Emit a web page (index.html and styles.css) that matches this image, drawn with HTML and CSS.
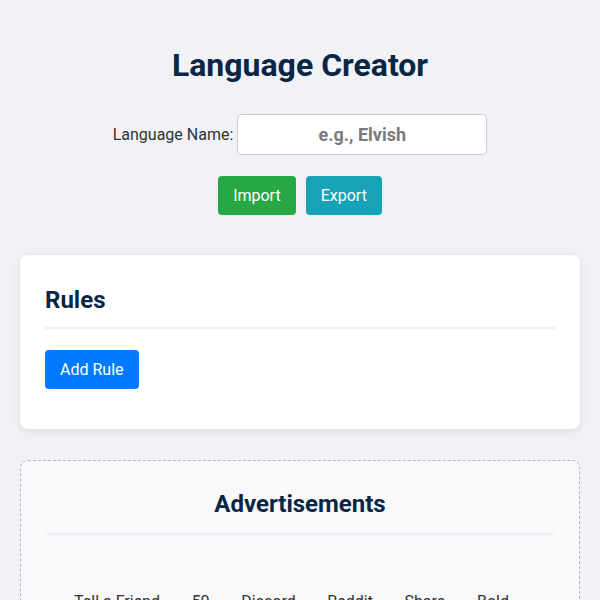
FILE: index.html
```html
<!DOCTYPE html>
<html lang="en">
<head>
<meta charset="utf-8">
<title>Language Creator</title>
<link rel="stylesheet" href="styles.css">
</head>
<body>
<div class="app">
  <h1 class="title">Language Creator</h1>
  <div class="name-row">
    <label class="name-label" for="lang">Language Name:</label>
    <input class="name-input" id="lang" type="text" placeholder="e.g., Elvish">
  </div>
  <div class="io-row">
    <button class="btn btn-import">Import</button>
    <button class="btn btn-export">Export</button>
  </div>
  <section class="card">
    <h2 class="card-title">Rules</h2>
    <button class="btn btn-add">Add Rule</button>
  </section>
  <section class="card ads">
    <h2 class="card-title centered">Advertisements</h2>
    <div class="ad-row">
      <span class="ad">Tell a Friend</span>
      <span class="ad">50</span>
      <span class="ad">Discord</span>
      <span class="ad">Reddit</span>
      <span class="ad">Share</span>
      <span class="ad">Bold</span>
    </div>
  </section>
</div>
</body>
</html>
```
FILE: styles.css
```css
* { box-sizing: border-box; }
html, body { margin: 0; padding: 0; }
body {
  background: #f0f2f5;
  font-family: Roboto, "Liberation Sans", sans-serif;
  color: #333;
}
.app {
  padding: 20px;
}
.title {
  margin: 27px 0 29px;
  font-size: 32px;
  line-height: 37.5px;
  font-weight: 700;
  text-align: center;
  color: #0b2545;
}
.name-row {
  display: flex;
  justify-content: center;
  align-items: center;
  gap: 4px;
}
.name-label {
  font-size: 16px;
  color: #333;
}
.name-input {
  width: 250px;
  height: 41px;
  padding: 9px 10px;
  border: 1px solid #ccc;
  border-radius: 4px;
  background: #fff;
  font-family: inherit;
  font-size: 18px;
  font-weight: 700;
  text-align: center;
  color: #333;
}
.name-input::placeholder {
  color: #7a7a7a;
  font-weight: 700;
}
.io-row {
  display: flex;
  justify-content: center;
  gap: 10px;
  margin-top: 21px;
}
.btn {
  border: none;
  border-radius: 4px;
  padding: 10px 15px;
  font-family: inherit;
  font-size: 16px;
  line-height: 19px;
  color: #fff;
  cursor: pointer;
}
.btn-import { background: #28a745; }
.btn-export { background: #17a2b8; }
.btn-add { background: #007bff; }
.card {
  margin-top: 40px;
  background: #fff;
  border-radius: 8px;
  box-shadow: 0 2px 8px rgba(0, 0, 0, 0.1);
  padding: 25px 25px 40px;
}
.card-title {
  margin: 6px 0 21px;
  padding-bottom: 13px;
  border-bottom: 2px solid #eceef1;
  font-size: 24px;
  line-height: 28px;
  font-weight: 700;
  color: #0b2545;
}
.card-title.centered { text-align: center; }
.ads {
  margin-top: 31px;
  background: #f8f9fb;
  border: 1px dashed #b5b8bd;
  box-shadow: none;
  padding-top: 24px;
}
.ads .card-title {
  margin-top: 5px;
  padding-bottom: 15px;
}
.ad-row {
  display: flex;
  justify-content: space-between;
  margin-top: 57px;
  padding: 0 45px 0 28px;
  font-size: 16px;
  color: #333;
}
```
